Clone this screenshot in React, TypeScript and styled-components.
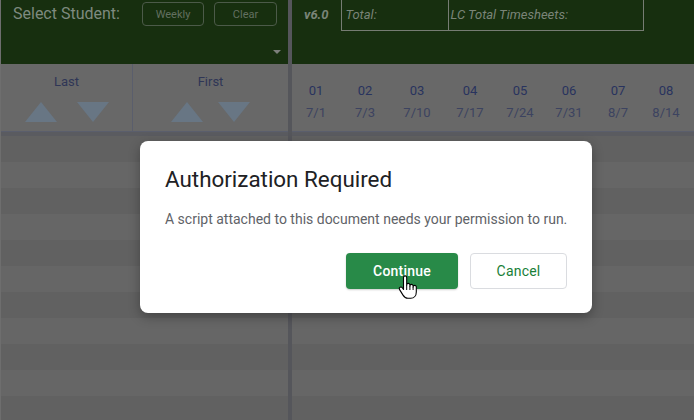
import React from 'react';
import styled, { createGlobalStyle } from 'styled-components';

const GlobalStyle = createGlobalStyle`
	html, body {
		margin: 0;
		padding: 0;
		background: #616161;
	}
	body {
		font-family: Roboto, 'Liberation Sans', Arial, sans-serif;
	}
	* {
		box-sizing: border-box;
	}
`;

const weeks = [
	{ num: '01', date: '7/1', width: 48 },
	{ num: '02', date: '7/3', width: 50 },
	{ num: '03', date: '7/10', width: 54 },
	{ num: '04', date: '7/17', width: 52 },
	{ num: '05', date: '7/24', width: 48 },
	{ num: '06', date: '7/31', width: 50 },
	{ num: '07', date: '8/7', width: 48 },
	{ num: '08', date: '8/14', width: 48 },
];

const ROW_COUNT = 12;

const Stripes = () => (
	<RowsStyle>
		{Array.from({ length: ROW_COUNT }).map((_, i) => (
			<StripeRowStyle key={i} light={i % 2 === 1} />
		))}
	</RowsStyle>
);

const HandCursor = () => (
	<CursorStyle width="19" height="25" viewBox="0 0 19 25">
		<path
			d="M5.5 2.5 a1.6 1.6 0 0 1 3.2 0 V10 a1.6 1.6 0 0 1 3.2 0 V11 a1.6 1.6 0 0 1 3.2 0 V12 a1.6 1.6 0 0 1 3.2 0 V17 c0 3.6 -2.2 6.3 -5.6 6.3 H9.8 c-2.2 0 -3.4 -1 -4.8 -3.2 L1.6 14.6 c-.6 -.9 -.3 -2 .6 -2.4 c.9 -.4 1.7 0 2.3 .8 L5.5 14.5 Z"
			fill="#fff"
			stroke="#000"
			strokeWidth="1.1"
			strokeLinejoin="round"
		/>
		<path d="M8.7 10 V15 M11.9 11 V15 M15.1 12 V15" stroke="#000" strokeWidth="1" />
	</CursorStyle>
);

const App = () => {
	return (
		<>
			<GlobalStyle />
			<ScreenStyle>
				<LeftPanelStyle>
					<LeftHeaderStyle>
						<HeaderTopStyle>
							<SelectLabelStyle>Select Student:</SelectLabelStyle>
							<OutlineButtonStyle w={62}>Weekly</OutlineButtonStyle>
							<OutlineButtonStyle w={63}>Clear</OutlineButtonStyle>
						</HeaderTopStyle>
						<CaretStyle />
					</LeftHeaderStyle>
					<SortRowStyle>
						<SortCellStyle w={132} divided gap={20}>
							<span>Last</span>
							<div>
								<TriangleStyle up />
								<TriangleStyle />
							</div>
						</SortCellStyle>
						<SortCellStyle gap={15}>
							<span>First</span>
							<div>
								<TriangleStyle up />
								<TriangleStyle />
							</div>
						</SortCellStyle>
					</SortRowStyle>
					<BandStyle />
					<Stripes />
				</LeftPanelStyle>

				<DividerStyle />

				<RightPanelStyle>
					<RightHeaderStyle>
						<VersionStyle>v6.0</VersionStyle>
						<TotalsBoxStyle>
							<TotalCellStyle w={107}>Total:</TotalCellStyle>
							<TotalCellStyle>LC Total Timesheets:</TotalCellStyle>
						</TotalsBoxStyle>
					</RightHeaderStyle>
					<WeekRowStyle>
						{weeks.map((w) => (
							<WeekCellStyle key={w.num} w={w.width}>
								<WeekNumStyle>{w.num}</WeekNumStyle>
								<WeekDateStyle>{w.date}</WeekDateStyle>
							</WeekCellStyle>
						))}
					</WeekRowStyle>
					<BandStyle />
					<Stripes />
				</RightPanelStyle>

				<BackdropStyle>
					<DialogStyle>
						<DialogTitleStyle>Authorization Required</DialogTitleStyle>
						<DialogTextStyle>
							A script attached to this document needs your permission to run.
						</DialogTextStyle>
						<DialogActionsStyle>
							<PrimaryButtonStyle>Continue</PrimaryButtonStyle>
							<SecondaryButtonStyle>Cancel</SecondaryButtonStyle>
						</DialogActionsStyle>
					</DialogStyle>
				</BackdropStyle>
				<HandCursor />
			</ScreenStyle>
		</>
	);
};

export default App;

export const ScreenStyle = styled.div`
	position: relative;
	width: 694px;
	height: 420px;
	overflow: hidden;

	display: grid;
	grid-template-columns: 288px 4px 1fr;
`;

const PanelStyle = styled.div`
	display: flex;
	flex-direction: column;
	min-width: 0;
`;

export const LeftPanelStyle = styled(PanelStyle)`
	border-left: 1px solid #6e6e6e;
`;

export const RightPanelStyle = styled(PanelStyle)``;

export const DividerStyle = styled.div`
	background: #55565b;
`;

export const LeftHeaderStyle = styled.div`
	height: 64px;
	background: #172f0f;
	padding: 2px 7px 0 12px;

	display: flex;
	flex-direction: column;
	justify-content: space-between;
`;

export const HeaderTopStyle = styled.div`
	display: flex;
	align-items: center;
	gap: 10px;
`;

export const SelectLabelStyle = styled.span`
	font-size: 16px;
	line-height: 24px;
	color: #7e8a7f;
	width: 119px;
	white-space: nowrap;
`;

export const OutlineButtonStyle = styled.button<{ w: number }>`
	width: ${(p) => p.w}px;
	height: 24px;
	background: transparent;
	border: 1px solid #4c5a49;
	border-radius: 4px;

	font-family: Roboto, 'Liberation Sans', sans-serif;
	font-size: 11px;
	color: #637060;
	padding: 0;
`;

export const CaretStyle = styled.div`
	align-self: flex-end;
	width: 0;
	height: 0;
	margin-bottom: 10px;
	border-left: 4px solid transparent;
	border-right: 4px solid transparent;
	border-top: 4px solid #7c7f7b;
`;

export const SortRowStyle = styled.div`
	height: 68px;
	background: #686868;
	border-bottom: 1px solid #5a5e6c;

	display: flex;
`;

export const SortCellStyle = styled.div<{ w?: number; divided?: boolean; gap: number }>`
	${(p) => (p.w ? `width: ${p.w}px;` : 'flex: 1;')}
	${(p) => (p.divided ? 'border-right: 1px solid #5a5e6c;' : '')}

	display: flex;
	flex-direction: column;
	align-items: center;
	padding-top: 10px;

	span {
		font-size: 13px;
		line-height: 16px;
		color: #2f3656;
	}

	div {
		margin-top: 12px;
		display: flex;
		gap: ${(p) => p.gap}px;
	}
`;

export const TriangleStyle = styled.i<{ up?: boolean }>`
	display: block;
	width: 0;
	height: 0;
	border-left: 16px solid transparent;
	border-right: 16px solid transparent;
	${(p) =>
		p.up ? 'border-bottom: 20px solid #687684;' : 'border-top: 20px solid #687684;'}
`;

export const BandStyle = styled.div`
	height: 4px;
	background: #5a5b60;
`;

export const RowsStyle = styled.div`
	display: flex;
	flex-direction: column;
`;

export const StripeRowStyle = styled.div<{ light: boolean }>`
	height: 26px;
	flex-shrink: 0;
	background: ${(p) => (p.light ? '#666666' : '#616161')};
`;

export const RightHeaderStyle = styled.div`
	height: 64px;
	background: #172f0f;
	padding-left: 12px;

	display: flex;
	align-items: flex-start;
	gap: 12px;
`;

export const VersionStyle = styled.span`
	font-size: 13px;
	font-weight: 700;
	font-style: italic;
	line-height: 30px;
	color: #7a8478;
`;

export const TotalsBoxStyle = styled.div`
	display: flex;
	width: 303px;
	height: 31px;
	border: 1px solid #767c73;
	border-top: none;
`;

export const TotalCellStyle = styled.div<{ w?: number }>`
	${(p) => (p.w ? `width: ${p.w}px; border-right: 1px solid #767c73;` : 'flex: 1;')}
	padding-left: ${(p) => (p.w ? 4 : 2)}px;

	font-size: 13px;
	font-style: italic;
	line-height: 30px;
	color: #7a8478;
	white-space: nowrap;
`;

export const WeekRowStyle = styled.div`
	height: 68px;
	background: #686868;
	border-bottom: 1px solid #5a5e6c;

	display: flex;
`;

export const WeekCellStyle = styled.div<{ w: number }>`
	width: ${(p) => p.w}px;
	flex-shrink: 0;
	padding-top: 16px;

	display: flex;
	flex-direction: column;
	align-items: center;
`;

export const WeekNumStyle = styled.span`
	font-size: 13px;
	line-height: 22px;
	color: #28335e;
`;

export const WeekDateStyle = styled.span`
	font-size: 13px;
	line-height: 22px;
	color: #3c4360;
`;

export const BackdropStyle = styled.div`
	position: absolute;
	inset: 0;
	padding: 141px 0 0 140px;
`;

export const DialogStyle = styled.div`
	width: 452px;
	background: #ffffff;
	border-radius: 8px;
	box-shadow: 0 4px 12px rgba(0, 0, 0, 0.3);
	padding: 24px 25px 24px 25px;
`;

export const DialogTitleStyle = styled.h2`
	margin: 0;
	font-size: 22.4px;
	font-weight: 400;
	line-height: 28px;
	color: #202124;
`;

export const DialogTextStyle = styled.p`
	margin: 16px 0 0;
	font-size: 14px;
	line-height: 20px;
	color: #5f6368;
	white-space: nowrap;
`;

export const DialogActionsStyle = styled.div`
	margin-top: 24px;
	display: flex;
	justify-content: flex-end;
	gap: 12px;
`;

const DialogButtonStyle = styled.button`
	height: 36px;
	border-radius: 4px;
	font-family: Roboto, 'Liberation Sans', sans-serif;
	font-size: 14px;
	font-weight: 500;
	letter-spacing: 0.2px;
	padding: 0;
`;

export const PrimaryButtonStyle = styled(DialogButtonStyle)`
	width: 112px;
	background: #288a48;
	border: none;
	color: #ffffff;
	box-shadow: 0 1px 2px rgba(0, 0, 0, 0.2);
`;

export const SecondaryButtonStyle = styled(DialogButtonStyle)`
	width: 97px;
	background: #ffffff;
	border: 1px solid #dadce0;
	color: #188038;
	font-weight: 400;
`;

export const CursorStyle = styled.svg`
	position: absolute;
	left: 398px;
	top: 275px;
`;
